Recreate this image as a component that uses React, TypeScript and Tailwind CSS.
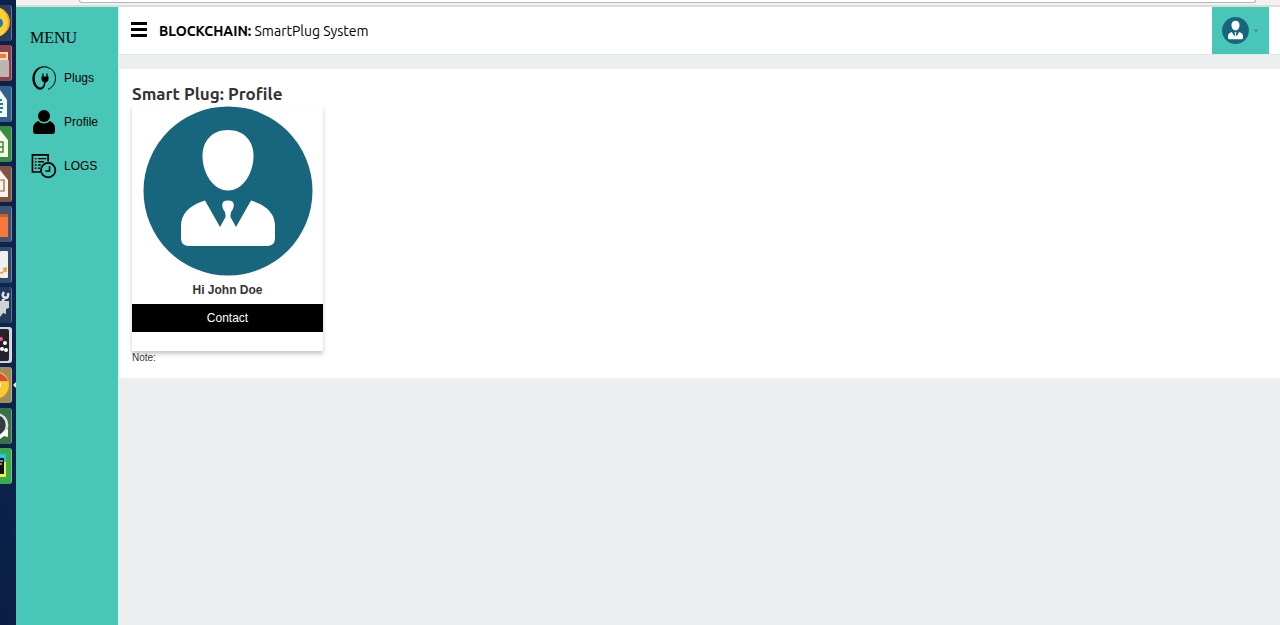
import React from "react";

type IconProps = { className?: string };

function Avatar({ className }: IconProps) {
  return (
    <svg viewBox="0 0 170 170" className={className} aria-hidden="true">
      <circle cx="85" cy="85" r="84.5" fill="#17667d" />
      <path
        fill="#fff"
        d="M85 24C101 24 110.500 35 110.500 50C110.500 67 100 84.500 85 84.500C70 84.500 59.500 67 59.500 50C59.500 35 69 24 85 24Z"
      />
      <path
        fill="#fff"
        d="M62 94.500L77 121L82.500 111Q83 106 80 103Q77 94.500 85 94.500Q93 94.500 90 103Q87 106 87.500 111L93 121L108 94.500Q132 102 132 120V132Q132 140 124 140H46Q38 140 38 132V120Q38 102 62 94.500Z"
      />
    </svg>
  );
}

function PlugIcon() {
  return (
    <svg viewBox="0 0 24 24" className="size-6" fill="none" stroke="#000" aria-hidden="true">
      <path
        fill="#000"
        stroke="none"
        d="M17 1.500C13 -0.500 7 0 3.500 4C-0.500 8.500 -0.500 15.500 2.500 20C5 24 9.500 25 12 21.500C13.200 19.800 13.500 18 13.500 16H12C12 18 11.500 20 10 21C7.500 22.500 5 20.500 3.700 17.500C2 13.500 2.500 8 5.500 4.500C8.500 1.200 12.500 0.800 17 1.500Z"
      />
      <path strokeWidth="1" d="M14 1Q23.500 3 23.500 12Q23.500 20 16 23.500" />
      <path strokeWidth="1.300" d="M11 7.500V11M15 7.500V11" />
      <path fill="#000" stroke="none" d="M9.500 10.500H16.500V13C16.500 15 15 16.500 13 16.500C11 16.500 9.500 15 9.500 13Z" />
    </svg>
  );
}

function PersonIcon() {
  return (
    <svg viewBox="0 0 24 24" className="size-6" fill="#000" aria-hidden="true">
      <ellipse cx="12" cy="6" rx="6" ry="6" />
      <path d="M6 11Q12 16 18 11Q23 13.500 23 18V21Q23 24 20 24H4Q1 24 1 21V18Q1 13.500 6 11Z" />
    </svg>
  );
}

function LogIcon() {
  return (
    <svg viewBox="0 0 26 26" className="size-6 overflow-visible" fill="none" stroke="#000" aria-hidden="true">
      <path strokeWidth="1.800" d="M9 19.500H0.500V1H17.500V8" />
      <path strokeWidth="1.600" d="M3 5H5M6.500 5H15.500M3 8.500H5M6.500 8.500H13M3 12H5M6.500 12H9.500M3 15.500H5M6.500 15.500H8.500" />
      <circle cx="17.500" cy="17.500" r="7.800" strokeWidth="1.900" />
      <path strokeWidth="1.600" d="M19 13V18.500H14.500" />
    </svg>
  );
}

const launchers: { name: string; tile: string; art: React.ReactNode }[] = [
  {
    name: "Firefox",
    tile: "bg-[#293f61]",
    art: (
      <>
        <circle cx="-5" cy="17" r="15" fill="#f9a51a" />
        <path d="M0 3Q8 8 8 18Q7 28 0 31Z" fill="#ffd234" />
        <circle cx="-2" cy="18" r="5" fill="#2878b5" />
      </>
    ),
  },
  {
    name: "Files",
    tile: "bg-[#914049]",
    art: (
      <>
        <rect y="7" width="8" height="14" fill="#e9ddd2" />
        <rect y="9" width="6" height="4" fill="#f07b28" />
        <rect y="15" width="9" height="17" rx="1" fill="#bcb6b3" />
      </>
    ),
  },
  {
    name: "Writer",
    tile: "bg-[#34618b]",
    art: (
      <>
        <path d="M0 4L7 14V31H0Z" fill="#f6fafb" />
        <path d="M0 14H2M0 18H3M0 22H3M0 26H2" stroke="#247daf" strokeWidth="2" />
      </>
    ),
  },
  {
    name: "Calc",
    tile: "bg-[#3b8c43]",
    art: (
      <>
        <path d="M0 4L8 14V31H0Z" fill="#f6fbef" />
        <path d="M0 16H3V26H0M0 21H3" fill="none" stroke="#3b8c2b" strokeWidth="1.500" />
      </>
    ),
  },
  {
    name: "Impress",
    tile: "bg-[#805442]",
    art: (
      <>
        <path d="M0 4L8 14V31H0Z" fill="#fbf5ed" />
        <path d="M0 14H4V25H0" fill="none" stroke="#a4573a" strokeWidth="1.200" />
      </>
    ),
  },
  {
    name: "Software",
    tile: "bg-[#44546e]",
    art: (
      <>
        <path d="M0 8H8V31H0Z" fill="#f5793b" />
        <path d="M0 8H8V11H0Z" fill="#c95f33" />
      </>
    ),
  },
  {
    name: "Amazon",
    tile: "bg-[#354969]",
    art: (
      <>
        <rect y="4" width="8" height="27" rx="1" fill="#f0f0ee" />
        <path d="M0 26Q4 26 6 21M3 22L6 21V25" fill="none" stroke="#f39b27" strokeWidth="1.500" />
      </>
    ),
  },
  {
    name: "Settings",
    tile: "bg-[#233a5e]",
    art: (
      <>
        <path d="M0 14H9V21L6 22V27L3 26L0 30Z" fill="#cfd1d2" />
        <path d="M2 14L6 10M4 5Q1 9 5 11Q9 11 8 6" fill="none" stroke="#e2e4e5" strokeWidth="2.500" />
      </>
    ),
  },
  {
    name: "Media",
    tile: "bg-[#d3d3d8]",
    art: (
      <>
        <rect x="-3" y="2" width="12" height="32" rx="2" fill="#25212a" />
        <circle cx="1" cy="12" r="2" fill="#e65a98" />
        <circle cx="5" cy="16" r="2" fill="#fff" />
        <circle cx="2" cy="22" r="2" fill="#fff" />
        <circle cx="6" cy="23" r="2" fill="#fff" />
      </>
    ),
  },
  {
    name: "Chrome",
    tile: "bg-[#a08d58]",
    art: (
      <>
        <circle cx="-5" cy="18" r="14" fill="#f9c832" />
        <path d="M0 6Q6 9 8 14H0Z" fill="#dd4c3b" />
        <circle cx="-4" cy="18" r="5" fill="#fff" />
      </>
    ),
  },
  {
    name: "Updater",
    tile: "bg-[#397345]",
    art: (
      <>
        <circle cx="-4" cy="17" r="11" fill="#333d40" stroke="#dfe4e1" strokeWidth="2.500" />
        <path d="M3 24L8 21V29L4 28L0 31V28Z" fill="#fff" />
      </>
    ),
  },
  {
    name: "PyCharm",
    tile: "bg-[#3cab50]",
    art: (
      <>
        <path d="M0 6H6V16H0Z" fill="#20c8e5" />
        <path d="M0 26V29H6V14H3Z" fill="#f4ee48" />
        <rect y="10" width="4" height="16" fill="#111" />
        <path d="M0 13H3M0 16H2" stroke="#fff" />
      </>
    ),
  },
];

const menu = [
  { label: "Plugs", icon: <PlugIcon /> },
  { label: "Profile", icon: <PersonIcon /> },
  { label: "LOGS", icon: <LogIcon /> },
];

function Launcher() {
  return (
    <nav
      aria-label="Launcher"
      className="w-4 shrink-0 bg-linear-to-b from-[#0b2147] via-[#0c2550] to-[#0b1f45]"
    >
      <div className="flex h-[484px] flex-col justify-between pt-[5px]">
        {launchers.map((item) => (
          <button
            key={item.name}
            aria-label={item.name}
            className="flex h-9 w-full items-center justify-between"
          >
            <span className={`block h-9 w-3 overflow-hidden rounded-r-[3px] border-r border-white/30 ${item.tile}`}>
              <svg viewBox="0 0 12 36" className="h-9 w-3" aria-hidden="true">
                {item.art}
              </svg>
            </span>
            {item.name === "Chrome" && (
              <svg viewBox="0 0 3 6" className="h-1.5 w-[3px]" aria-hidden="true">
                <path d="M3 0V6L0 3Z" fill="#e6eaf0" />
              </svg>
            )}
          </button>
        ))}
      </div>
    </nav>
  );
}

export default function App() {
  return (
    <div className="flex min-h-screen bg-[#ebefef] font-['Liberation_Sans',Arial,sans-serif] text-[#333]">
      <Launcher />
      <div className="flex min-w-0 flex-1 flex-col">
        <div className="h-[7px] border-b-2 border-[#dcdcdc] bg-[#f2f1f0] pr-6 pl-[63px]">
          <div className="h-[3px] rounded-b-sm border border-t-0 border-[#b9b7b5] bg-white" />
        </div>
        <div className="flex flex-1">
          <aside className="w-[103px] shrink-0 border-r border-[#d9efeb] bg-[#48c6b7] pt-[21px] pl-3.5 text-black">
            <h2 className="font-['Liberation_Serif','Times_New_Roman',serif] text-base leading-5">MENU</h2>
            <nav aria-label="Main menu" className="mt-[18px] flex flex-col gap-5 pl-0.5">
              {menu.map((item) => (
                <a key={item.label} href="#" className="flex items-center gap-2 text-xs">
                  {item.icon}
                  {item.label}
                </a>
              ))}
            </nav>
          </aside>
          <div className="min-w-0 flex-1">
            <header className="flex h-12 items-center border-b border-[#e2e5e5] bg-white pr-[11px] pl-3">
              <button aria-label="Toggle menu" className="mr-3 mb-0.5 flex w-4 flex-col gap-[3px]">
                <span className="h-[3px] w-full bg-black" />
                <span className="h-[3px] w-full bg-black" />
                <span className="h-[3px] w-full bg-black" />
              </button>
              <h1 className="font-[Ubuntu,'Noto_Sans',sans-serif] text-sm text-black">
                <strong>BLOCKCHAIN:</strong> SmartPlug System
              </h1>
              <button
                aria-label="Account"
                className="ml-auto flex h-full w-[57px] items-center gap-1 bg-[#48c6b7] pl-2.5"
              >
                <Avatar className="size-[27px]" />
                <svg viewBox="0 0 6 4" className="h-1 w-1.5" aria-hidden="true">
                  <path d="M0.500 0.500H5.500L3 3.500Z" fill="#5d8a86" />
                </svg>
              </button>
            </header>
            <main className="mt-3.5 bg-white px-[13px] pt-3 pb-[13px]">
              <h2 className="font-[Ubuntu,'Noto_Sans',sans-serif] text-[17px] leading-[25px] font-bold">
                Smart Plug: Profile
              </h2>
              <section className="flex w-[191px] flex-col items-center pb-[19px] text-center shadow-[0_3px_4px_rgba(0,0,0,0.22)]">
                <Avatar className="size-[170px]" />
                <h3 className="pt-1 pb-1 text-xs leading-5 font-bold">Hi John Doe</h3>
                <button className="h-7 w-full bg-black text-xs text-white">Contact</button>
              </section>
              <p className="text-[10px] leading-[14px]">Note:</p>
            </main>
          </div>
        </div>
      </div>
    </div>
  );
}
